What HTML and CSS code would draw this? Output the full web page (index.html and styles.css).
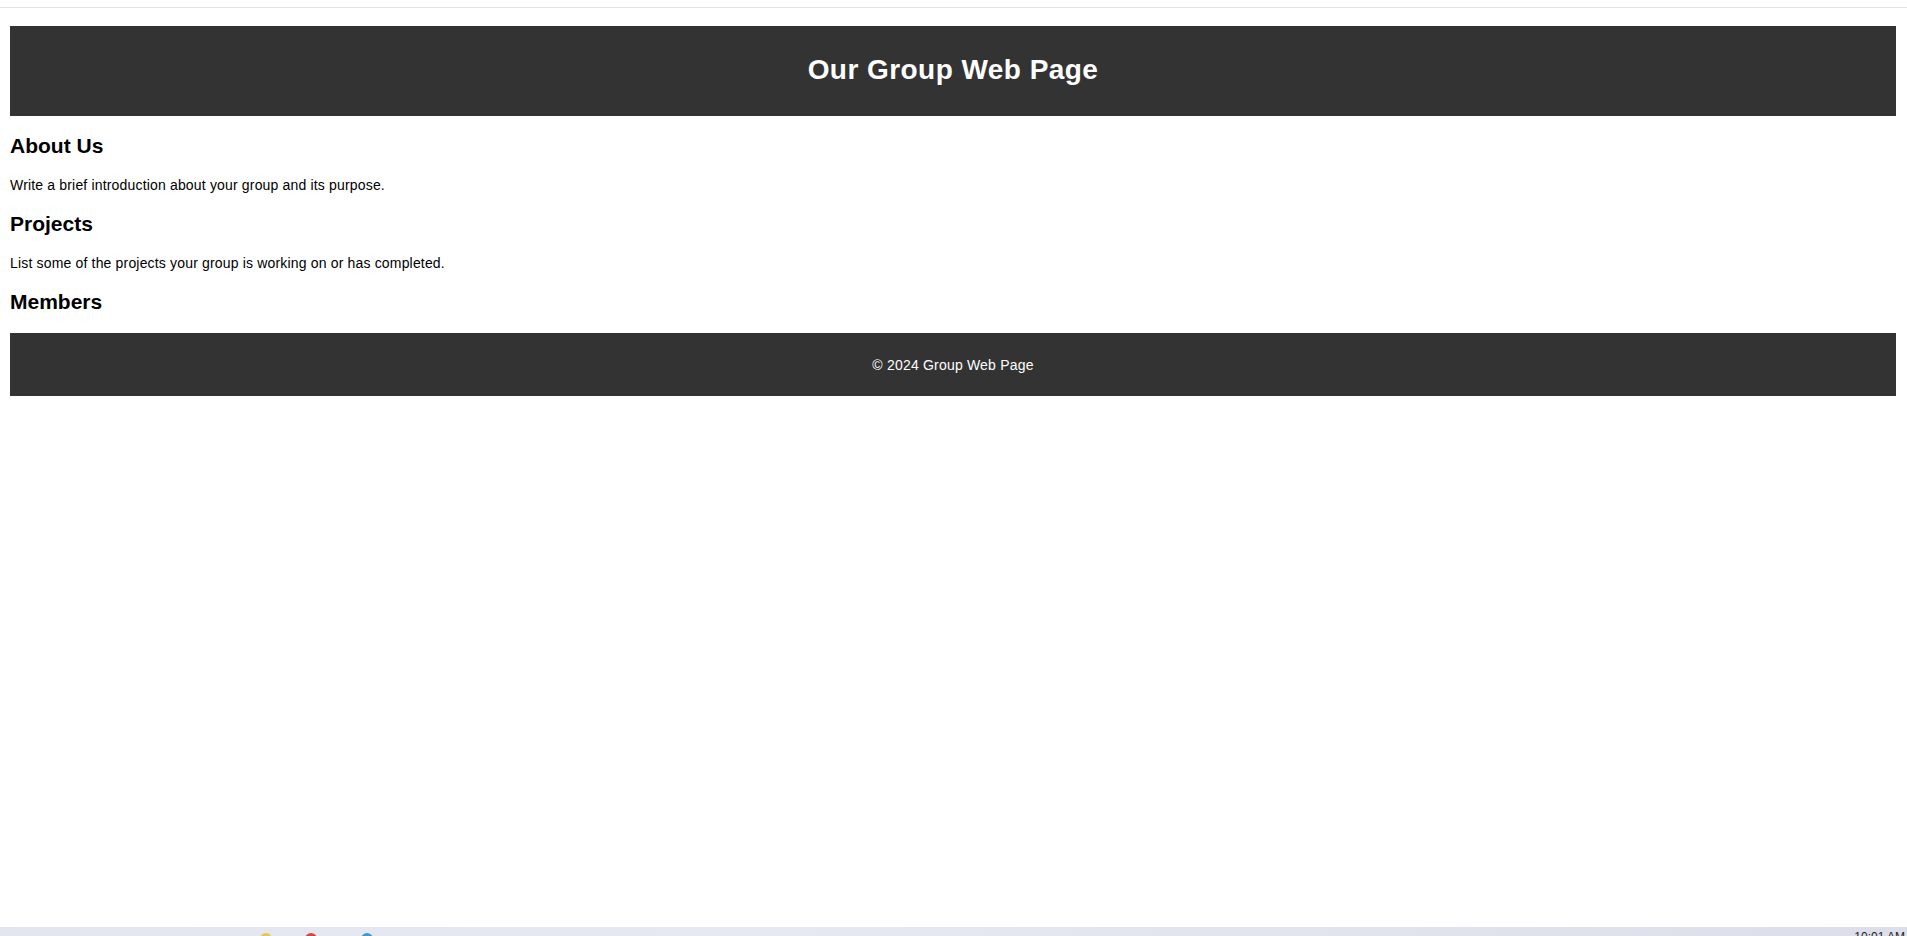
FILE: index.html
```html
<!DOCTYPE html>
<html lang="en">
<head>
<meta charset="utf-8">
<title>Our Group Web Page</title>
<link rel="stylesheet" href="styles.css">
</head>
<body>
<div class="chrome-line"></div>
<div class="page">
  <header class="site-header">
    <h1 class="site-title">Our Group Web Page</h1>
  </header>
  <main class="content">
    <section class="block">
      <h2 class="block-title">About Us</h2>
      <p class="block-text">Write a brief introduction about your group and its purpose.</p>
    </section>
    <section class="block">
      <h2 class="block-title">Projects</h2>
      <p class="block-text">List some of the projects your group is working on or has completed.</p>
    </section>
    <section class="block">
      <h2 class="block-title">Members</h2>
    </section>
  </main>
  <footer class="site-footer">
    <p class="footer-text">&copy; 2024 Group Web Page</p>
  </footer>
</div>
<div class="taskbar">
  <div class="taskbar-icons">
    <span class="tb-icon tb-yellow"></span>
    <span class="tb-icon tb-red"></span>
    <span class="tb-icon tb-blue"></span>
  </div>
  <div class="taskbar-clock">10:01 AM</div>
</div>
</body>
</html>
```

FILE: styles.css
```css
html, body {
  margin: 0;
  padding: 0;
  background: #ffffff;
}

body {
  font-family: "Liberation Sans", Arial, sans-serif;
  font-size: 14px;
  color: #000;
}

.chrome-line {
  height: 7px;
  border-bottom: 1px solid #e3e3e3;
}

.page {
  padding: 18px 11px 0 10px;
}

.site-header {
  background: #333333;
  color: #ffffff;
  text-align: center;
  padding: 9px 10px 11px;
}

.site-title {
  font-size: 28px;
  font-weight: bold;
  margin: 0.67em 0;
  letter-spacing: 0.45px;
}

.content {
  display: block;
}

.block-title {
  font-size: 21px;
  font-weight: bold;
  margin: 18px 0 19px;
}

.block-text {
  margin: 19px 0;
  letter-spacing: 0.17px;
}

.site-footer {
  background: #333333;
  color: #ffffff;
  text-align: center;
  padding: 10px 10px 9px;
}

.footer-text {
  margin: 14px 0;
  letter-spacing: 0.2px;
}

.taskbar {
  position: fixed;
  left: 0;
  right: 0;
  bottom: 0;
  height: 9px;
  overflow: hidden;
  background: linear-gradient(90deg, #e3e6ee 0%, #e6e9f1 40%, #dcdfe9 100%);
  display: flex;
  justify-content: space-between;
}

.taskbar-icons {
  display: flex;
  padding: 6px 0 0 260px;
}

.tb-icon {
  width: 12px;
  height: 12px;
  border-radius: 50%;
}

.tb-yellow { background: #e8c84a; }
.tb-red { background: #d8443a; margin-left: 33px; }
.tb-blue { background: #3a9ad8; margin-left: 44px; }

.taskbar-clock {
  font-family: "Liberation Sans", Arial, sans-serif;
  font-size: 12px;
  color: #222;
  padding: 3px 2px 0 0;
  line-height: 14px;
}
```
